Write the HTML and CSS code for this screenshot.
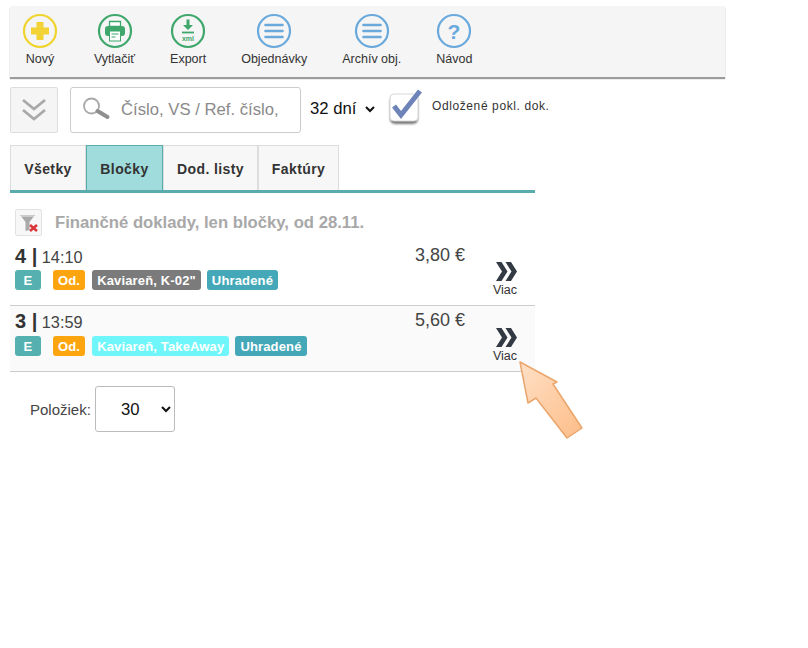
FILE: index.html
```html
<!DOCTYPE html>
<html lang="sk">
<head>
<meta charset="utf-8">
<title>Doklady</title>
<link rel="stylesheet" href="styles.css">
</head>
<body>
<div class="page">
  <nav class="toolbar">
    <a class="tool"><svg class="ico" viewBox="0 0 36 36"><circle cx="18" cy="18" r="16" fill="none" stroke="#f0d42e" stroke-width="2.200"/><path d="M14.500 9h7v5.500H27v7h-5.500V27h-7v-5.500H9v-7h5.500z" fill="#f2d235"/></svg><span>Nový</span></a>
    <a class="tool"><svg class="ico" viewBox="0 0 36 36"><circle cx="18" cy="18" r="16" fill="none" stroke="#3fa76c" stroke-width="2.200"/><path d="M12.500 8.500h11v5h-11z" fill="#fff" stroke="#3fa76c" stroke-width="1.300"/><rect x="8" y="13" width="20" height="10" rx="3" fill="#3fa76c"/><rect x="12.500" y="18" width="11" height="10" fill="#fff" stroke="#3fa76c" stroke-width="1"/><path d="M14.500 21h7M14.500 24h4" stroke="#3fa76c" stroke-width="1"/></svg><span>Vytlačiť</span></a>
    <a class="tool"><svg class="ico" viewBox="0 0 36 36"><circle cx="18" cy="18" r="16" fill="none" stroke="#3fa76c" stroke-width="2.200"/><path d="M16.500 6.500h3v5.500H23l-5 5-5-5h3.500z" fill="#3fa76c"/><path d="M12 19.500h12" stroke="#3fa76c" stroke-width="1.800"/><text x="18" y="27.500" class="xml">xml</text></svg><span>Export</span></a>
    <a class="tool"><svg class="ico" viewBox="0 0 36 36"><circle cx="18" cy="18" r="16" fill="none" stroke="#6aa9dc" stroke-width="2.200"/><path d="M9.500 12h17M9.500 18h17M9.500 24h17" stroke="#6aa9dc" stroke-width="2.600" stroke-linecap="round"/></svg><span>Objednávky</span></a>
    <a class="tool"><svg class="ico" viewBox="0 0 36 36"><circle cx="18" cy="18" r="16" fill="none" stroke="#6aa9dc" stroke-width="2.200"/><path d="M9.500 12h17M9.500 18h17M9.500 24h17" stroke="#6aa9dc" stroke-width="2.600" stroke-linecap="round"/></svg><span>Archív obj.</span></a>
    <a class="tool"><svg class="ico" viewBox="0 0 36 36"><circle cx="18" cy="18" r="16" fill="none" stroke="#6aa9dc" stroke-width="2.200"/><text x="18" y="25.500" class="qm">?</text></svg><span>Návod</span></a>
  </nav>

  <div class="filters">
    <button class="collapse" type="button"><svg width="26" height="24" viewBox="0 0 26 24"><path d="M2 2l11 9 11-9M2 12l11 9 11-9" fill="none" stroke="#a9a9a9" stroke-width="2.800"/></svg></button>
    <label class="search">
      <svg class="lens" width="29" height="24" viewBox="0 0 29 24"><circle cx="9.500" cy="9" r="7.500" fill="#fff" stroke="#a8a8a8" stroke-width="1.800"/><path d="M15.500 14l10 6" stroke="#8f8f8f" stroke-width="4" stroke-linecap="round"/></svg>
      <input type="text" placeholder="Číslo, VS / Ref. číslo,">
    </label>
    <select class="days"><option>32 dní</option></select>
    <span class="check"><svg width="38" height="38" viewBox="0 0 38 38"><defs><filter id="soft" x="-20%" y="-20%" width="140%" height="140%"><feGaussianBlur stdDeviation="1"/></filter></defs><rect x="3" y="8" width="28" height="28" rx="5" fill="#777" filter="url(#soft)"/><rect x="3" y="6" width="28" height="27" rx="4" fill="#fff" stroke="#d8d8d8"/><path d="M7 18l7 9L33 3" fill="none" stroke="#6e83b8" stroke-width="5"/></svg></span>
    <span class="check-label">Odložené pokl. dok.</span>
  </div>

  <div class="tabs">
    <a class="tab">Všetky</a>
    <a class="tab active">Bločky</a>
    <a class="tab">Dod. listy</a>
    <a class="tab">Faktúry</a>
  </div>

  <div class="heading">
    <span class="funnel"><svg width="22" height="22" viewBox="0 0 22 22"><path d="M2 3h15l-5.500 7v8l-4 1v-9z" fill="#a9a9a9"/><path d="M3 4h13" stroke="#d8d8d8" stroke-width="1.500"/><path d="M12 13l7 6M19 13l-7 6" stroke="#d9363a" stroke-width="2.600"/></svg></span>
    <span>Finančné doklady, len bločky, od 28.11.</span>
  </div>

  <div class="row">
    <div class="main">
      <div class="title"><b>4 |</b> <span>14:10</span></div>
      <div class="tags"><i class="tag teal e">E</i><i class="tag orange">Od.</i><i class="tag grey">Kaviareň, K-02"</i><i class="tag blue">Uhradené</i></div>
    </div>
    <div class="price">3,80 €</div>
    <a class="more"><svg width="21" height="19" viewBox="0 0 21 19"><path d="M0 0h5.500l6 9.500-6 9.500H0l6-9.500zM9.500 0H15l6 9.500-6 9.500H9.500l6-9.500z" fill="#333a44"/></svg><span>Viac</span></a>
  </div>
  <div class="row alt">
    <div class="main">
      <div class="title"><b>3 |</b> <span>13:59</span></div>
      <div class="tags"><i class="tag teal e">E</i><i class="tag orange">Od.</i><i class="tag cyan">Kaviareň, TakeAway</i><i class="tag blue">Uhradené</i></div>
    </div>
    <div class="price">5,60 €</div>
    <a class="more"><svg width="21" height="19" viewBox="0 0 21 19"><path d="M0 0h5.500l6 9.500-6 9.500H0l6-9.500zM9.500 0H15l6 9.500-6 9.500H9.500l6-9.500z" fill="#333a44"/></svg><span>Viac</span></a>
  </div>

  <div class="pager">
    <span>Položiek:</span>
    <select class="count"><option>30</option></select>
  </div>
</div>

<svg class="pointer" width="72" height="84" viewBox="0 0 72 84">
  <defs>
    <linearGradient id="peach" x1="0" y1="0" x2="1" y2="1">
      <stop offset="0" stop-color="#ffe0c6"/>
      <stop offset="1" stop-color="#fdbd88"/>
    </linearGradient>
  </defs>
  <path d="M1 1L38 21 34 23 63 67 48 77 17 37 9 42z" fill="url(#peach)" stroke="#eaa66c" stroke-width="1.500" stroke-linejoin="round"/>
</svg>
</body>
</html>
```

FILE: styles.css
```css
* { box-sizing: border-box; }
html, body { margin: 0; padding: 0; background: #fff; }
body { font-family: "Liberation Sans", Arial, sans-serif; color: #333; position: relative; height: 648px; overflow: hidden; }
.page { padding: 6px 0 0 10px; width: 725px; }

.toolbar { display: flex; gap: 35px; height: 71px; padding: 7px 0 0 12px; background: #f5f5f5; box-shadow: 0 2px 1px #9c9c9c; }
.tool { display: flex; flex-direction: column; align-items: center; gap: 3px; font-size: 12.500px; color: #333; min-width: 36px; }
.tool:first-child { margin-right: 1px; }
.ico { width: 36px; height: 36px; display: block; }
.xml { font: bold 7px "Liberation Sans", sans-serif; fill: #3fa76c; text-anchor: middle; }
.qm { font: bold 21px "Liberation Sans", sans-serif; fill: #6aa9dc; text-anchor: middle; }

.filters { display: flex; align-items: center; margin-top: 10px; height: 46px; }
.collapse { width: 48px; height: 46px; padding: 0; margin-right: 12px; background: #f5f5f5; border: 1px solid #ddd; border-radius: 2px; display: flex; align-items: center; justify-content: center; }
.search { width: 231px; height: 46px; display: flex; align-items: center; gap: 10px; padding: 0 0 1px 11px; border: 1px solid #ccc; border-radius: 3px; background: #fff; }
.lens { flex: none; margin-bottom: 2px; }
.search input { border: 0; outline: 0; width: 170px; padding: 0; font: 16.700px "Liberation Sans", sans-serif; background: transparent; }
.search input::placeholder { color: #8a8a8a; opacity: 1; }
.days { margin: 0 0 3px 5px; width: 72px; height: 30px; border: 0; background: #fff; font: 16.700px "Liberation Sans", sans-serif; color: #111; }
.check { width: 38px; height: 38px; margin-left: 9px; margin-bottom: 6px; }
.check-label { margin-left: 7px; margin-bottom: 8px; font-size: 12px; letter-spacing: .6px; color: #333; }

.tabs { display: flex; margin-top: 12px; width: 525px; height: 48px; border-bottom: 3px solid #5aacac; }
.tab { height: 45px; padding-top: 2px; display: flex; align-items: center; justify-content: center; background: #f7f7f7; border: 1px solid #ddd; border-bottom: 0; font-size: 14px; font-weight: bold; letter-spacing: .4px; color: #333; }
.tab:nth-child(1) { width: 76px; }
.tab:nth-child(2) { width: 77px; }
.tab:nth-child(3) { width: 95px; }
.tab:nth-child(4) { width: 81px; }
.tab.active { background: #a0dcdc; border-color: #5aacac; }

.heading { display: flex; align-items: center; gap: 13px; width: 525px; height: 27px; margin-top: 16px; padding-left: 5px; font-size: 16.700px; font-weight: bold; color: #a8a8a8; }
.funnel { width: 27px; height: 27px; background: #f7f7f7; border: 1px solid #e2e2e2; border-radius: 2px; display: flex; align-items: center; justify-content: center; }

.row { display: flex; width: 525px; height: 66px; padding-left: 5px; border-bottom: 1px solid #ccc; position: relative; }
.heading + .row { height: 70px; padding-top: 4px; }
.heading + .row .title { padding-top: 5px; }
.heading + .row .price { padding-top: 4px; }
.row.alt { background: #fafafa; }
.main { flex: 1; }
.title { height: 30px; padding-top: 4px; font-size: 16.300px; line-height: 22px; color: #444; }
.title b { font-size: 20px; color: #333; }
.tags { display: flex; height: 20px; }
.tag { display: flex; align-items: center; height: 20px; padding: 0 5px; margin-right: 6px; border-radius: 3px; font-style: normal; font-weight: bold; font-size: 13px; letter-spacing: .15px; color: #fff; white-space: nowrap; }
.tag.e { width: 26px; justify-content: center; margin-right: 12px; }
.tag.orange { margin-right: 7px; }
.teal { background: #55b0b0; }
.orange { background: #fda50f; }
.grey { background: #7b7b7b; }
.cyan { background: #6ff6fb; }
.blue { background: #45a8b8; }
.price { width: 60px; margin-right: 10px; padding-top: 3px; font-size: 18px; line-height: 22px; text-align: right; color: #444; }
.more { width: 60px; padding-top: 22px; display: flex; flex-direction: column; align-items: center; font-size: 12.500px; color: #333; }
.more svg { display: block; margin: 0 0 2px 3px; }

.pager { display: flex; align-items: center; gap: 4px; margin: 14px 0 0 20px; font-size: 15px; color: #444; }
.count { width: 80px; height: 46px; padding-left: 21px; border: 1px solid #bbb; border-radius: 3px; background: #fff; font: 16.700px "Liberation Sans", sans-serif; color: #111; }

.pointer { position: absolute; left: 519px; top: 361px; }
```
